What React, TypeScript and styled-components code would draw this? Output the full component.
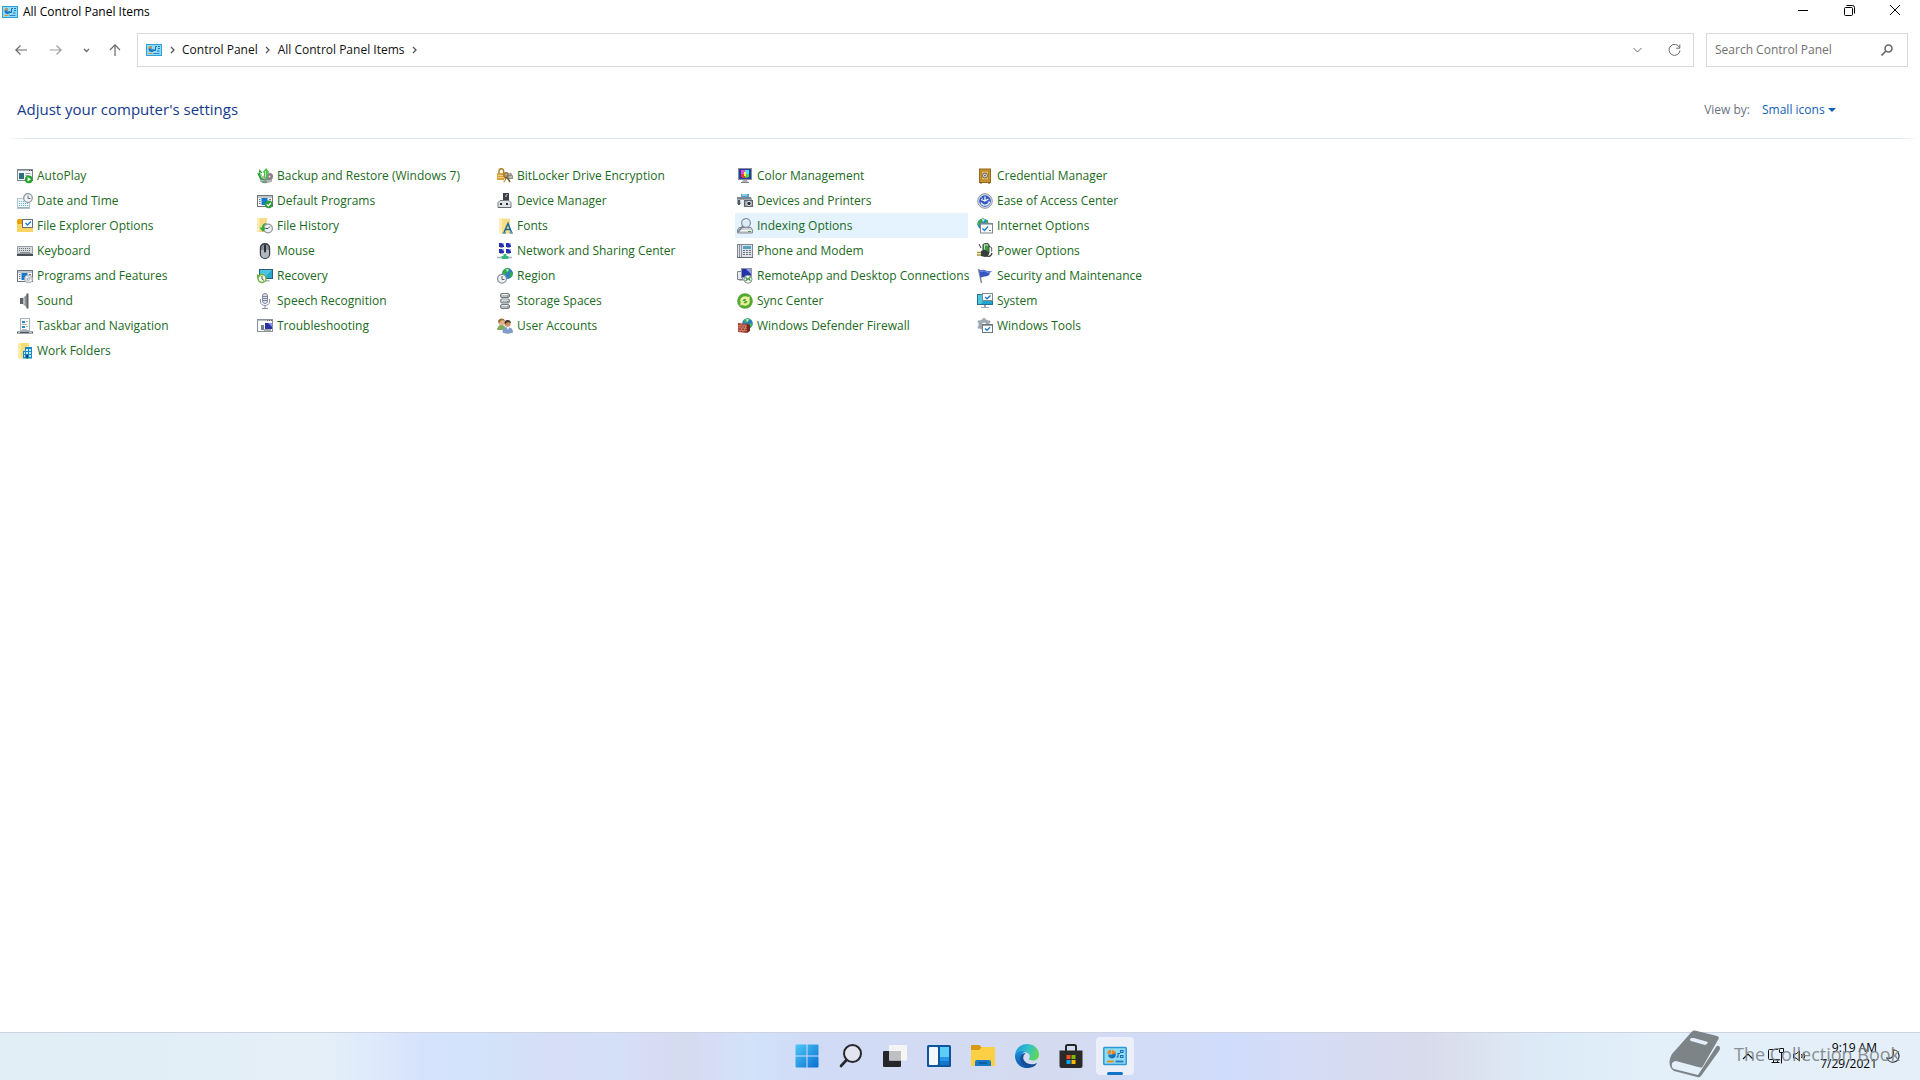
import React from "react";
import styled, { createGlobalStyle } from "styled-components";

const GlobalStyle = createGlobalStyle`
  * { box-sizing: border-box; }
  html, body, #root { height: 100%; }
  body {
    margin: 0;
    background: #fff;
    color: #000;
    font-family: "Open Sans", "Noto Sans", sans-serif;
    font-size: 12px;
    line-height: 16px;
    overflow: hidden;
  }
  button, input, select { font: inherit; color: inherit; }
  svg { flex-shrink: 0; }
`;

/* ---------- layout ---------- */

const Desktop = styled.div`
  display: flex;
  flex-direction: column;
  min-height: 100vh;
`;

const Window = styled.main`
  display: flex;
  flex-direction: column;
  flex: 1;
`;

const TitleBar = styled.header`
  display: flex;
  align-items: center;
  gap: 5px;
  height: 24px;
  padding: 0 2px;
`;

const Title = styled.h1`
  flex: 1;
  margin: 0;
  font-size: 12px;
  font-weight: 400;
`;

const PlainButton = styled.button`
  display: flex;
  align-items: center;
  justify-content: center;
  padding: 0;
  border: 0;
  background: none;
`;

const CaptionButtons = styled.div`
  display: flex;
  align-self: flex-start;
`;

const CaptionButton = styled(PlainButton)`
  width: 46px;
  height: 20px;
`;

const NavBar = styled.nav`
  display: flex;
  align-items: center;
  height: 34px;
  margin-top: 9px;
  padding: 0 12px 0 4px;
`;

const NavButton = styled(PlainButton)<{ $width: number }>`
  width: ${(p) => p.$width}px;
  height: 32px;
`;

const AddressBar = styled.div`
  display: flex;
  flex: 1;
  align-items: center;
  height: 34px;
  margin: 0 12px 0 5px;
  padding-left: 8px;
  border: 1px solid #d9d9d9;
`;

const Crumb = styled.a`
  color: #111;
  text-decoration: none;
`;

const CrumbArrow = styled.span`
  display: flex;
  justify-content: center;
  width: 20px;
`;

const Spacer = styled.div`
  flex: 1;
`;

const AddressButton = styled(PlainButton)`
  width: 37px;
  height: 32px;
`;

const SearchBox = styled.label`
  display: flex;
  align-items: center;
  width: 202px;
  height: 34px;
  padding: 0 14px 0 8px;
  border: 1px solid #d9d9d9;
`;

const SearchInput = styled.input`
  flex: 1;
  min-width: 0;
  padding: 0;
  border: 0;
  outline: 0;
  background: none;
  &::placeholder { color: #6f6f6f; opacity: 1; }
`;

const Heading = styled.section`
  display: flex;
  align-items: center;
  justify-content: space-between;
  height: 71px;
  padding: 14px 84px 0 17px;
`;

const HeadingTitle = styled.h2`
  margin: 0;
  padding-bottom: 2px;
  color: #133a8c;
  font-size: 15px;
  font-weight: 400;
  line-height: 20px;
`;

const ViewBy = styled.div`
  display: flex;
  align-items: center;
  gap: 12px;
  color: #6b7280;
`;

const SelectWrap = styled.span`
  display: flex;
  align-items: center;
`;

const ViewSelect = styled.select`
  width: 66px;
  padding: 0;
  border: 0;
  outline: 0;
  background: none;
  color: #0f5fb8;
  appearance: none;
`;

const Divider = styled.hr`
  width: 100%;
  height: 1px;
  margin: 0;
  border: 0;
  background: linear-gradient(90deg, #fff 6px, #dbe5ec 30px, #dbe5ec calc(100% - 24px), #fff);
`;

const ItemGrid = styled.ul`
  display: grid;
  grid-template-columns: repeat(5, 233px);
  grid-auto-rows: 25px;
  column-gap: 7px;
  margin: 24px 0 0;
  padding: 0 0 0 15px;
  list-style: none;
`;

const ItemLink = styled.a<{ $active: boolean }>`
  display: flex;
  align-items: center;
  gap: 4px;
  height: 25px;
  padding-left: 2px;
  background: ${(p) => (p.$active ? "#e5f3ff" : "transparent")};
  color: #1b6a22;
  text-decoration: none;
  white-space: nowrap;
`;

const Taskbar = styled.footer`
  position: relative;
  display: grid;
  grid-template-columns: 1fr auto 1fr;
  align-items: center;
  height: 48px;
  padding-left: 2px;
  box-shadow: inset 0 1px #cdd3e2;
  background: linear-gradient(
    90deg,
    #e1eef6 0%, #e4eff8 17%, #dde8fb 20%, #d6e2fc 22%, #d2e3fa 25%, #d7ddf7 29%,
    #d4e0f8 32%, #d8dbf4 34%, #d4dbee 36%, #d7dcf6 37%, #d2e2f9 39%, #d1dbf6 42%,
    #d4dbf0 55%, #d0dcfb 64%, #d5dcf5 68%, #d8daea 74%, #dde5f2 78%, #dcebf7 81%,
    #e3eff9 86%, #e4effa 100%
  );
`;

const TaskButtons = styled.div`
  display: flex;
  grid-column: 2;
`;

const TaskButton = styled(PlainButton)<{ $active?: boolean }>`
  position: relative;
  width: 38px;
  height: 38px;
  margin: 0 3px;
  border-radius: 4px;
  background: ${(p) => (p.$active ? "#eceff9" : "transparent")};
  &::after {
    content: "";
    position: absolute;
    bottom: 0;
    left: 11px;
    width: 16px;
    height: 3px;
    border-radius: 2px;
    background: ${(p) => (p.$active ? "#1173c7" : "transparent")};
  }
`;

const Tray = styled.div`
  display: flex;
  align-items: center;
  justify-content: flex-end;
  padding-right: 20px;
`;

const TrayButton = styled(PlainButton)`
  width: 24px;
  height: 24px;
  &:first-child { margin-right: 4px; }
`;

const Clock = styled(PlainButton)`
  flex-direction: column;
  align-items: flex-end;
  width: 65px;
  margin-right: 9px;
`;

const Watermark = styled.div`
  position: absolute;
  top: -2px;
  right: 20px;
  display: flex;
  align-items: center;
  gap: 12px;
  color: #7f8588;
  font-size: 18px;
  line-height: 48px;
  opacity: 0.9;
  pointer-events: none;
`;

/* ---------- icons ---------- */

const Icon16 = ({ children }: { children: React.ReactNode }) => (
  <svg width="16" height="16" viewBox="0 0 16 16" fill="none" aria-hidden="true">
    {children}
  </svg>
);

const PanelArt = () => (
  <>
    <rect x=".5" y="2.5" width="15" height="11" fill="#8fdcfa" stroke="#2b9fd6" />
    <path d="M5.5 7.5V4A3 3 0 1 0 8.5 7z" fill="#1f78c4" />
    <path d="M5 6.5V3.7A3 3 0 0 0 2.3 6.5z" fill="#f08a1c" />
    <path d="M8 8.5h1.5V4.5h1.5M11 9h2.5M12 4.5h2M12 6.5h2" stroke="#1f6fb5" />
    <path d="M2.5 11.5h4" stroke="#f08a1c" />
    <path d="M7.5 11.5h6" stroke="#2f84c8" />
  </>
);

const WindowArt = () => (
  <>
    <rect x=".5" y="2.5" width="15" height="11" fill="#f7f8fa" stroke="#6d747c" />
    <path d="M1 4h14" stroke="#8c949c" />
    <rect x="4.5" y="5" width="6" height="7" fill="#1479cf" />
    <path d="M2 6.5h1.5M2 8.5h1.5M2 10.5h1.5M12 6.5h2M12 8.5h2" stroke="#6d747c" />
  </>
);

const icons: Record<string, React.ReactNode> = {
  AutoPlay: (
    <>
      <rect x=".5" y="1.5" width="15" height="11" fill="#f4f6f8" stroke="#7d848b" />
      <path d="M1 2.5h14" stroke="#a8b0b8" />
      <path d="M12 2.5h1M14 2.5h1" stroke="#4b5259" />
      <rect x="2" y="5" width="5" height="6" fill="#2f6f7c" />
      <path d="M8.5 5.5h5M8.5 7.5h3" stroke="#9aa2aa" />
      <circle cx="11.8" cy="11.3" r="3.9" fill="#25a32f" />
      <path d="M10.6 9.1v4.4l3.4-2.2z" fill="#fff" />
    </>
  ),
  "Date and Time": (
    <>
      <rect x=".5" y="5.5" width="12" height="10" fill="#eef5f8" stroke="#b5c3cb" />
      <path d="M2 8.5h9M2 10.5h9M2 12.5h9" stroke="#62b4cb" strokeDasharray="1 1" />
      <path d="M1 14.5h11" stroke="#9fb0b8" />
      <circle cx="11" cy="5" r="4.3" fill="#f2f4f5" stroke="#8d979e" strokeWidth="1.2" />
      <path d="M11 2.5V5.5h2.5" stroke="#66727c" />
    </>
  ),
  "File Explorer Options": (
    <>
      <path d="M0 2.5L1 1h4.500L7 3h8v10.500H0z" fill="#e8a30c" />
      <path d="M0 6h16v8H1l-1-1z" fill="#fbd462" />
      <rect x="5.5" y="1.5" width="10" height="8" fill="#fff" stroke="#656d76" />
      <path d="M8.5 5l2 2L14 3.5" stroke="#1c7bd0" strokeWidth="1.4" />
    </>
  ),
  Keyboard: (
    <>
      <path d="M.5 3.5h15v7H.5z" fill="#d9dde1" stroke="#979da3" />
      <path d="M2 5.5h12M2 7.5h12" stroke="#666d74" strokeDasharray="1 1" />
      <path d="M3 9.5h10" stroke="#888e94" />
      <path d="M0 11h16v2H0z" fill="#4a5057" />
    </>
  ),
  "Programs and Features": (
    <>
      <WindowArt />
      <circle cx="11.5" cy="11" r="4" fill="#d5d9dd" stroke="#a5acb3" strokeWidth=".8" />
      <path d="M11.5 11L9 8.5M11.5 11l3 2" stroke="#fff" strokeWidth="1.4" />
      <circle cx="11.5" cy="11" r="1.1" fill="#fff" stroke="#8d949b" strokeWidth=".7" />
    </>
  ),
  Sound: (
    <>
      <path d="M3 5h3v6H3z" fill="#5d6064" />
      <path d="M6 5l5-4.500v15L6 11z" fill="#94989c" />
      <path d="M10.500 .5v15" stroke="#5f6266" strokeWidth="2" />
      <path d="M7 5v6" stroke="#d8dbdd" />
    </>
  ),
  "Taskbar and Navigation": (
    <>
      <rect x="3.5" y=".5" width="9" height="12" fill="#f6f8fa" stroke="#aab2b9" />
      <path d="M5 3h3v2H5zM5 8h3v2H5z" fill="#2a85c9" />
      <path d="M9 3.5h2M9 8.5h2M5 6.5h5M5 11.5h5" stroke="#b3bbc2" />
      <path d="M0 13.500h16v2H0z" fill="#4b525b" />
      <path d="M1 14.5h2M12 14.5h3" stroke="#b9c0c8" />
    </>
  ),
  "Work Folders": (
    <>
      <path d="M1 0h11v15l-10 .5L1 14z" fill="#f9dc74" />
      <path d="M1 0h3v15.500L1 14z" fill="#fdeaa4" />
      <path d="M8 4h7v11.500H6V8h2z" fill="#1488c9" />
      <path d="M9 6h2v2H9zM12 6h2v2h-2zM9 9h2v2H9zM12 9h2v2h-2zM7 9h1v2H7zM7 12h1v2H7zM12 12h2v2h-2z" fill="#c5ebfc" />
      <path d="M9.5 12h1.500v3.500H9.5z" fill="#0b3f73" />
    </>
  ),
  "Backup and Restore (Windows 7)": (
    <>
      <path d="M3 9l5-2 7 2v5l-7 1.500L3 14z" fill="#b2b7bb" />
      <path d="M3 10l5 2 7-2" stroke="#6b7176" />
      <circle cx="12.5" cy="8.5" r="3.5" fill="#8b7f86" />
      <circle cx="12.5" cy="8.5" r="1" fill="#efdbe0" />
      <path d="M2 9L0 5l1.500.5L2.500 1l3 4H4l2 7-3-.5z" fill="#2fa43b" />
      <path d="M5.500 4.500L9 0l3.500 4.500-2 .5V12L7 9.500V4.500z" fill="#4fbf4d" />
      <path d="M3 4l2 6M8.500 3v6" stroke="#b0e6a0" />
      <path d="M5 14h5" stroke="#37853a" />
    </>
  ),
  "Default Programs": (
    <>
      <WindowArt />
      <circle cx="11.7" cy="11.3" r="3.9" fill="#2d9d3b" />
      <path d="M9.8 11.3l1.500 1.500 2.500-2.800" stroke="#fff" strokeWidth="1.2" />
    </>
  ),
  "File History": (
    <>
      <path d="M0 0h10v14H1l-1-1z" fill="#f7da86" />
      <path d="M0 0h2.500v13.500L0 13z" fill="#fcecb6" />
      <circle cx="11" cy="10.5" r="4.4" fill="#eef1f3" stroke="#8d959c" strokeWidth="1.2" />
      <path d="M11 10.5l2-2M11 10.5H8.5" stroke="#48525b" />
      <path d="M9.5 5C6 5 5 7.5 5 9.5H2.5L6 14l3-4.500H7c0-1.500.5-3 2.500-4.500z" fill="#35a941" />
    </>
  ),
  Mouse: (
    <>
      <rect x="3.5" y=".7" width="9" height="14.600" rx="4.2" fill="#8b939d" stroke="#343941" strokeWidth="1.4" />
      <path d="M4 7h8v4a4 4 0 0 1-8 0z" fill="#b0b7c0" />
      <rect x="7" y="1.5" width="2" height="8" rx="1" fill="#262b31" />
    </>
  ),
  Recovery: (
    <>
      <rect x="2.5" y="1.5" width="13" height="9" fill="#27a6ce" stroke="#2d5c78" />
      <path d="M3 2h12L7 10H3z" fill="#4cc5e0" />
      <path d="M8 12h4l1 1.500H8z" fill="#aab2b8" />
      <circle cx="5" cy="10.5" r="4" fill="#f0f6e9" stroke="#72af3c" strokeWidth="1.4" />
      <path d="M5 8v3l2 1.500" stroke="#4a5f3b" />
      <path d="M0 6v4.500L3.500 8z" fill="#72af3c" />
    </>
  ),
  "Speech Recognition": (
    <>
      <rect x="5.5" y=".5" width="5" height="10" rx="2.5" fill="#dfe2e9" stroke="#8288a0" />
      <path d="M6 3.5h4M6 5.5h4M6 7.5h4" stroke="#7c849c" />
      <path d="M3.5 6v3c0 2 2 3.500 4.500 3.500s4.500-1.500 4.500-3.500V6M8 12.5V15M5 15.5h6" stroke="#8a90a6" />
    </>
  ),
  Troubleshooting: (
    <>
      <rect x=".5" y="1.5" width="15" height="12" fill="#fafbfc" stroke="#8b9198" />
      <path d="M1 2.5h14" stroke="#b9c0c7" />
      <path d="M10 2.5h1M12 2.5h1M14 2.5h1" stroke="#5b6269" />
      <rect x="4" y="7" width="3" height="5" fill="#74808b" />
      <rect x="8" y="5" width="7" height="6" fill="#2830a5" />
      <path d="M11 5h4v4z" fill="#8b94e8" />
      <path d="M7 12h7" stroke="#575e66" />
      <path d="M5 8h1" stroke="#3fbd42" />
    </>
  ),
  "BitLocker Drive Encryption": (
    <>
      <path d="M7 5h7l2 3v3H7z" fill="#8d9092" />
      <path d="M8 6h5M8 9h7" stroke="#dde0de" />
      <path d="M2 6V3a2.300 2.300 0 0 1 4.600 0V6" stroke="#a98331" strokeWidth="1.5" />
      <rect y="5" width="8" height="7" rx="1" fill="#d9a136" />
      <path d="M1 7.5h6M1 9.5h6" stroke="#f4d282" />
      <circle cx="9" cy="7" r="2.2" stroke="#a1762e" strokeWidth="1.4" />
      <path d="M9 9l-2 5M10 9l3 5" stroke="#7c6131" strokeWidth="1.6" />
      <path d="M6.5 14.5L8 10" stroke="#f4e6bd" />
    </>
  ),
  "Device Manager": (
    <>
      <rect x="6" y="0" width="6" height="8" fill="#3d4146" />
      <path d="M8 3h2" stroke="#d7dade" />
      <path d="M9 1.5h2" stroke="#90969c" />
      <path d="M3 7.5h9l2 2v5H1v-5z" fill="#dfe2e4" stroke="#777d82" />
      <path d="M3 10h2v2H3zM9 10h2v2H9z" fill="#25292d" />
      <path d="M1 14.5h13" stroke="#62676c" />
    </>
  ),
  Fonts: (
    <>
      <path d="M2 .5h11v15H4l-2-2z" fill="#f9de87" />
      <path d="M2 .5h3v15H4l-2-2z" fill="#fdeeb8" />
      <path d="M7 14.5L11 5.5l3.500 9M8.5 11.5h5" stroke="#17699c" strokeWidth="1.5" />
      <path d="M5.5 15h3.500M12.5 15h3.500" stroke="#17699c" />
    </>
  ),
  "Network and Sharing Center": (
    <>
      <path d="M2 0h5v4H2zM9 0h5v4H9zM2 6h5v4H2zM9 6h5v4H9z" fill="#2632b4" />
      <path d="M4.500 0H7v2.500zM11.500 0H14v2.500zM4.500 6H7v2.500zM11.500 6H14v2.500z" fill="#9da7f4" />
      <path d="M3 4.500h3M10 4.500h3M3 10.500h3M10 10.500h3" stroke="#9da3b0" />
      <path d="M6.500 11h3v2h2v3h-7v-3h2z" fill="#35b87f" />
      <path d="M0 14.500h4.500M11.500 14.500H15" stroke="#a9b3b3" strokeWidth="1.6" />
    </>
  ),
  Region: (
    <>
      <circle cx="10.5" cy="5.5" r="5.4" fill="#2a7fc9" />
      <path d="M7 1.5C9 0 12 0 13 1l-1 3-3 1-1 3-2-1C5 5 5.5 3 7 1.500zM13 5l2.500-1c1 3-1 5.500-3 6.500z" fill="#36ab46" />
      <path d="M9 1l3 .5L10 4z" fill="#b7ecda" />
      <circle cx="5" cy="10.8" r="4.4" fill="#eef2f5" stroke="#87939d" strokeWidth="1.2" />
      <path d="M5 8v3.500h2.500" stroke="#59656f" />
    </>
  ),
  "Storage Spaces": (
    <>
      {[0, 5.5, 11].map((y) => (
        <g key={y}>
          <rect x="3.5" y={y + 0.5} width="9" height="4" rx="1.5" fill="#b9bdc0" stroke="#747a7f" />
          <path d={`M5 ${y + 1.5}h6`} stroke="#eceef0" />
          <path d={`M10 ${y + 3}h1.5`} stroke="#4e9d45" />
        </g>
      ))}
    </>
  ),
  "User Accounts": (
    <>
      <circle cx="4.5" cy="4" r="3.2" fill="#e2b388" />
      <path d="M1 4C1 0 7-1 8 3L5 2 2 5z" fill="#9a7138" />
      <path d="M0 12c0-3 2-5 4.500-5S9 9 9 12z" fill="#7eaa62" />
      <circle cx="10.5" cy="5.5" r="3.2" fill="#cf8f64" />
      <path d="M7.5 5c0-4 6-4 6.500 0l-3-1-3 2z" fill="#42352e" />
      <path d="M5.5 14.5c0-4 2-5.500 5-5.500s5.500 2 5.500 5.500c-3 1.500-8 1.500-10.500 0z" fill="#7f9ccb" />
      <path d="M9.5 9l1.500 3 1.500-3z" fill="#fff" />
    </>
  ),
  "Color Management": (
    <>
      <rect x="1.5" y=".5" width="13" height="11" fill="#273da4" stroke="#8a8f98" />
      <path d="M4 2h4v4H4z" fill="#e94bd0" />
      <path d="M8 2h4v4H8z" fill="#4ee4ee" />
      <path d="M4 6h4v4H5L4 8z" fill="#e53935" />
      <path d="M8 6h4v3l-4 1z" fill="#59da43" />
      <path d="M7 4h2v4H7z" fill="#fff36b" />
      <path d="M6 12h4l1 2H5z" fill="#abb0b6" />
      <path d="M4 14.5h8" stroke="#7f858c" />
    </>
  ),
  "Devices and Printers": (
    <>
      <path d="M4 1h8v4H4z" fill="#54a4cb" />
      <path d="M5 2h5" stroke="#c4ebfa" />
      <path d="M0 4h14l1 2v5H0z" fill="#a4abb1" />
      <path d="M0 5h14" stroke="#5d656c" />
      <path d="M3 7h5v7H5z" fill="#e7eff5" />
      <path d="M1 7h2v5H1z" fill="#4e565e" />
      <rect x="7.5" y="7.5" width="8" height="6" fill="#9ba1a7" stroke="#5b6168" />
      <circle cx="12" cy="10.5" r="2.2" fill="#2e3338" stroke="#e1e4e6" />
    </>
  ),
  "Indexing Options": (
    <>
      <path d="M2 9.5h12l1.500 2.500v3H.5v-3z" fill="#d0d4d8" stroke="#878c92" />
      <path d="M1 12.500h14" stroke="#f8f9fa" />
      <path d="M11 13.500h3" stroke="#4c9b42" />
      <circle cx="9" cy="5" r="4.4" fill="#d9eaf9" fillOpacity=".9" stroke="#8592a1" strokeWidth="1.2" />
      <path d="M6 8l-5 6" stroke="#788390" strokeWidth="1.6" />
      <path d="M6.500 4c.5-1.500 2-2 3.500-2" stroke="#fff" />
    </>
  ),
  "Phone and Modem": (
    <>
      <rect x=".5" y="1.5" width="15" height="13" fill="#dfe3e7" stroke="#7f868e" />
      <path d="M2.5 2v12M4.5 2v12" stroke="#89929b" />
      <rect x="6" y="3" width="8" height="3" fill="#54a2bf" />
      <path d="M6 7.5h8M6 9.5h8M6 11.5h8" stroke="#68727c" strokeDasharray="2 1" />
      <path d="M0 14.5h16" stroke="#5e666e" />
    </>
  ),
  "RemoteApp and Desktop Connections": (
    <>
      <path d="M.5 3.5h5v8h-5z" fill="#e8ebef" stroke="#7d8590" />
      <rect x="4.5" y=".5" width="10" height="9" fill="#2634a7" stroke="#8f95a0" />
      <path d="M9 1h5v5z" fill="#8f9cf0" />
      <path d="M2 12h5" stroke="#78808a" />
      <circle cx="11" cy="11.3" r="4" fill="#f3f5f4" stroke="#8b9490" />
      <path d="M8.5 9.500l2 1.800-2 1.800M13.500 9l-2 1.800 2 1.800" stroke="#31953c" strokeWidth="1.2" />
    </>
  ),
  "Sync Center": (
    <>
      <circle cx="8" cy="8" r="7.8" fill="#55a832" />
      <path d="M3 8a5 5 0 0 1 8-3.800L12.500 3v5H8l1.500-1.800C7.500 5 6 6 5.500 8z" fill="#eef3a4" />
      <path d="M13 8a5 5 0 0 1-8 3.800L3.500 13V8H8L6.500 9.800C8.500 11 10 10 10.500 8z" fill="#e6ee9a" />
    </>
  ),
  "Windows Defender Firewall": (
    <>
      <circle cx="10.5" cy="5.5" r="5.3" fill="#2b7ac0" />
      <path d="M7 2c2-2 5-2 6-1l-2 3-3 1zM12 6l3.500-1c0 3-1 4-3 5z" fill="#47b454" />
      <path d="M9 1l3 .5L10 4z" fill="#c6efe6" />
      <path d="M1 5l9 1v9l-9-1z" fill="#a13e2b" />
      <path d="M10 6l3 1v6l-3 2z" fill="#702a20" />
      <path d="M1 7.5l9 .5M1 9.800l9 .5M1 12.200l9 .5M4 5.500v2M7 6v2M3 7.500v2.300M6 8v2M8.500 8v2M4.500 10v2M7.500 10v2.500M3 12.200v2M6 12.500v2" stroke="#e0a08c" strokeWidth=".6" />
    </>
  ),
  "Credential Manager": (
    <>
      <rect x="2.5" y="1" width="11" height="13.5" fill="#c9952f" stroke="#94691d" />
      <rect x="4.5" y="3" width="7" height="9" fill="#e3bd66" stroke="#b2822b" />
      <circle cx="8" cy="7.5" r="2.5" fill="#d6d3c8" stroke="#6e655a" />
      <circle cx="8" cy="7.5" r=".8" fill="#4a443c" />
      <path d="M3 15h2M11 15h2" stroke="#70501a" />
    </>
  ),
  "Ease of Access Center": (
    <>
      <circle cx="8" cy="8" r="7.3" fill="#d6dbe4" stroke="#8e96a5" />
      <circle cx="8" cy="8" r="5.8" fill="#3157c2" />
      <path d="M8 3.5v4.500l3.500-2M4 6.500L8 8" stroke="#fff" strokeWidth="1.3" />
      <path d="M4 9.500c1 3.500 7 3.500 8 0" stroke="#dfe9ff" strokeWidth="1.3" />
      <path d="M10.500 8.500h2.500v2z" fill="#fff" />
      <path d="M4.500 4.500l1 1" stroke="#fff" />
    </>
  ),
  "Internet Options": (
    <>
      <circle cx="6" cy="6" r="5.6" fill="#2a86cd" />
      <path d="M2 2.500C4 0 7 0 8 1L6 4 3 5 2 8 .5 7c0-2 .5-3 1.500-4.500zM9 3l2-1v4H8z" fill="#3dab4d" />
      <path d="M5 1l3 .5L6 4z" fill="#cdf2e9" />
      <rect x="3.5" y="5.5" width="12" height="9.5" fill="#fafbfc" stroke="#7f868d" />
      <path d="M4 6.500h11" stroke="#b3bac1" />
      <path d="M5.500 10.500l2 2L11 8.500" stroke="#1c7ac8" strokeWidth="1.3" />
      <path d="M12 12.500h2" stroke="#747c84" />
    </>
  ),
  "Power Options": (
    <>
      <path d="M6 1.500C8 0 11 0 12 1.500v9c-1 1.500-4 1.500-6 0z" fill="#3c9a45" stroke="#3b4a40" />
      <path d="M7.500 2v7" stroke="#b9e9b2" />
      <path d="M7 2h4" stroke="#d9e3dd" />
      <path d="M2 1l2 4M12 3.500c3 0 3 3 2.500 5" stroke="#343b37" />
      <path d="M4 8l4-1.500 4 3c0 3-2 4.500-4 4.500l-4-1z" fill="#383c3a" />
      <path d="M9 12c2 2 5 2 6-2" stroke="#3b403d" strokeWidth="1.3" />
      <path d="M0 9.500h4M0 12h4" stroke="#a99539" strokeWidth="1.3" />
    </>
  ),
  "Security and Maintenance": (
    <>
      <path d="M1.5 1l3 14" stroke="#81889a" strokeWidth="1.4" />
      <path d="M2 1.500c3 2 4-1 7 1 2 1.200 4 .8 6.500.5-2 1-3 2-3 3.500-3 3.500-5 .5-9 3.500z" fill="#3656c4" />
      <path d="M3 3c3 1 4-1 6 .5s3 1.500 4 1" stroke="#839be8" />
    </>
  ),
  System: (
    <>
      <rect x=".5" y="1.5" width="15" height="10" fill="#23a6cc" stroke="#25718e" />
      <path d="M1 2h9L4 11H1z" fill="#4cc7df" />
      <path d="M7 12h2v2H7z" fill="#9aa2a9" />
      <path d="M4 14.5h8" stroke="#a3abb2" />
      <rect x="5.5" y=".5" width="10" height="7" fill="#fff" stroke="#808991" />
      <path d="M8 4l2 1.800L13.500 2.500" stroke="#1978cb" strokeWidth="1.3" />
    </>
  ),
  "Windows Tools": (
    <>
      <circle cx="7" cy="6.5" r="3.8" stroke="#a0a8b0" strokeWidth="3.6" />
      <path d="M7 0v3M7 10v3M1 3l3 2M13 3l-3 2M1 10l3-2" stroke="#a0a8b0" strokeWidth="2.6" />
      <rect x="5.5" y="6.5" width="10" height="8" fill="#fff" stroke="#6d757d" />
      <path d="M6 7.500h9" stroke="#979fa7" />
      <path d="M8 10.500l2 1.800 3-3" stroke="#1978cb" strokeWidth="1.3" />
    </>
  ),
};

const itemNames = [
  "AutoPlay", "Backup and Restore (Windows 7)", "BitLocker Drive Encryption", "Color Management", "Credential Manager",
  "Date and Time", "Default Programs", "Device Manager", "Devices and Printers", "Ease of Access Center",
  "File Explorer Options", "File History", "Fonts", "Indexing Options", "Internet Options",
  "Keyboard", "Mouse", "Network and Sharing Center", "Phone and Modem", "Power Options",
  "Programs and Features", "Recovery", "Region", "RemoteApp and Desktop Connections", "Security and Maintenance",
  "Sound", "Speech Recognition", "Storage Spaces", "Sync Center", "System",
  "Taskbar and Navigation", "Troubleshooting", "User Accounts", "Windows Defender Firewall", "Windows Tools",
  "Work Folders",
];

type StrokeProps = { d: string; w?: number; h?: number; color?: string; sw?: number };
const Stroke = ({ d, w = 12, h = 12, color = "#6b6b6b", sw = 1 }: StrokeProps) => (
  <svg width={w} height={h} viewBox={`0 0 ${w} ${h}`} fill="none" stroke={color} strokeWidth={sw} aria-hidden="true">
    <path d={d} />
  </svg>
);

const Chevron = () => <Stroke w={5} h={8} d="M1 1l3 3-3 3" color="#555" sw={1.3} />;

const taskIcons: { label: string; art: React.ReactNode }[] = [
  {
    label: "Start",
    art: (
      <>
        <defs>
          <linearGradient id="start" x1="0" y1="0" x2="1" y2="1">
            <stop stopColor="#4cc8f7" />
            <stop offset="1" stopColor="#0a6fd0" />
          </linearGradient>
        </defs>
        <path d="M.5 1.5a1 1 0 0 1 1-1H11.500v11H.5zM12.500.5h10a1 1 0 0 1 1 1v10h-11zM.5 12.500h11v11h-10a1 1 0 0 1-1-1zM12.500 12.500h11v10a1 1 0 0 1-1 1h-10z" fill="url(#start)" />
      </>
    ),
  },
  {
    label: "Search",
    art: (
      <>
        <circle cx="13.5" cy="9.5" r="8.5" fill="#e2e5f0" stroke="#26282d" strokeWidth="2" />
        <path d="M7.500 16L2 22" stroke="#26282d" strokeWidth="2.6" strokeLinecap="round" />
      </>
    ),
  },
  {
    label: "Task view",
    art: (
      <>
        <rect x="0" y="7" width="18" height="16" rx="1" fill="#26272a" />
        <rect x="6" y="1" width="18" height="15.5" rx="1" fill="#f5f5f6" />
        <path d="M6 7h12v9.500H6z" fill="#bfc0c2" />
      </>
    ),
  },
  {
    label: "Widgets",
    art: (
      <>
        <rect width="24" height="22" y="1" rx="1.5" fill="#0f569c" />
        <rect x="2" y="3" width="9" height="18" rx="1" fill="#f4f8fc" />
        <path d="M13 3h9v10h-9z" fill="#5ecdfa" />
        <path d="M13 13h9v4h-9z" fill="#2497e8" />
        <path d="M13 17h9v4h-9z" fill="#1477cb" />
      </>
    ),
  },
  {
    label: "File Explorer",
    art: (
      <>
        <path d="M0 2a1 1 0 0 1 1-1h7.500l2.500 3v3H0z" fill="#d99a10" />
        <path d="M0 6h8l3-3h12a1 1 0 0 1 1 1v18H1a1 1 0 0 1-1-1z" fill="#fccf44" />
        <path d="M4 22v-4a2 2 0 0 1 2-2h12a2 2 0 0 1 2 2v4z" fill="#1778c5" />
        <path d="M8 19h8" stroke="#0b5496" strokeWidth="1.5" />
      </>
    ),
  },
  {
    label: "Microsoft Edge",
    art: (
      <>
        <defs>
          <linearGradient id="edgeTop" x1="0" y1=".3" x2="1" y2=".6">
            <stop stopColor="#1c9bdb" />
            <stop offset=".5" stopColor="#35c1c9" />
            <stop offset="1" stopColor="#63d84f" />
          </linearGradient>
          <linearGradient id="edgeSide" x1="0" y1="0" x2="0" y2="1">
            <stop stopColor="#1b8edb" />
            <stop offset="1" stopColor="#0d55ab" />
          </linearGradient>
        </defs>
        <path d="M0 11.500C.5 5 5.500 0 12 0c7 0 12 5 12 10.500 0 4-3 6-6 6-2.500 0-4.500-1-4-2 1.500-2 1-5-2.500-6C7 7.500 2 9 0 13z" fill="url(#edgeTop)" />
        <path d="M0 12c1.500-4.500 6-6 10-4.500-3 1.500-4 4.500-3.500 7.500.8 4.500 5 7 9 6.500 3-.3 5.500-2 6.500-2-2 3-6 4.500-10 4.500C5 24 0 18.500 0 12z" fill="url(#edgeSide)" />
        <path d="M10.500 9.500c-2.500 1.500-3 5-1 7.500 3 4 9 4 12.500 2-2 3.500-7 5-10 4-5-1.500-7.500-5.500-6.500-10 .7-2.500 3-4.500 5-3.500z" fill="#164f96" />
      </>
    ),
  },
  {
    label: "Microsoft Store",
    art: (
      <>
        <path d="M7 7V2.500A1.500 1.500 0 0 1 8.500 1h7A1.500 1.500 0 0 1 17 2.500V7" stroke="#242527" strokeWidth="2" />
        <path d="M.5 6.500h23V22a2 2 0 0 1-2 2h-19a2 2 0 0 1-2-2z" fill="#2a2a2b" />
        <path d="M7.500 11h4v4h-4z" fill="#f25022" />
        <path d="M12.500 11h4v4h-4z" fill="#7fba00" />
        <path d="M7.500 16h4v4h-4z" fill="#00a4ef" />
        <path d="M12.500 16h4v4h-4z" fill="#ffb900" />
      </>
    ),
  },
  {
    label: "Control Panel",
    art: (
      <>
        <rect x=".8" y="3.5" width="22.4" height="17" rx=".8" fill="#8edcf8" stroke="#2b9bd2" strokeWidth="1.5" />
        <path d="M9 10.500V6.800a3.800 3.800 0 1 1-3.800 3.800z" fill="#1c70b8" />
        <path d="M8.300 9.800V5.800a4.200 4.200 0 0 0-4.100 4z" fill="#f0851a" />
        <path d="M9 10.500V6.300a4.200 4.200 0 0 1 4 3z" fill="#f0851a" />
        <path d="M13.500 13h1.500V9.500h2M17.500 6.500h2.500v2h-2.500zM17.500 11.500h2.500v2h-2.500z" stroke="#1d6db2" strokeWidth="1.1" />
        <path d="M4 17.500h7" stroke="#ed8a22" strokeWidth="1.8" />
        <path d="M12.500 17.500h8" stroke="#2375bd" strokeWidth="1.8" />
      </>
    ),
  },
];

export default function App() {
  return (
    <Desktop>
      <GlobalStyle />
      <Window>
        <TitleBar>
          <Icon16><PanelArt /></Icon16>
          <Title>All Control Panel Items</Title>
          <CaptionButtons>
            <CaptionButton aria-label="Minimize"><Stroke w={10} h={10} d="M0 5.500h10" color="#000" /></CaptionButton>
            <CaptionButton aria-label="Restore">
              <Stroke w={11} h={11} d="M.5 3.500a1 1 0 0 1 1-1h6a1 1 0 0 1 1 1v6a1 1 0 0 1-1 1h-6a1 1 0 0 1-1-1zM2.500 .5h6a2 2 0 0 1 2 2v6" color="#000" />
            </CaptionButton>
            <CaptionButton aria-label="Close"><Stroke w={10} h={10} d="M0 0l10 10M10 0L0 10" color="#000" /></CaptionButton>
          </CaptionButtons>
        </TitleBar>

        <NavBar aria-label="Location">
          <NavButton $width={34} aria-label="Back"><Stroke w={12} h={10} d="M12 5H.8M5.500 .5L.8 5l4.700 4.500" sw={1.2} /></NavButton>
          <NavButton $width={36} aria-label="Forward"><Stroke w={12} h={10} d="M0 5h11.200M6.500 .5L11.200 5 6.500 9.500" color="#9d9d9d" sw={1.2} /></NavButton>
          <NavButton $width={24} aria-label="Recent locations"><Stroke w={7} h={5} d="M1 1l2.500 2.500L6 1" sw={1.3} /></NavButton>
          <NavButton $width={34} aria-label="Up"><Stroke w={12} h={12} d="M6 12V.8M1 6L6 .8 11 6" sw={1.2} /></NavButton>
          <AddressBar>
            <Icon16><PanelArt /></Icon16>
            <CrumbArrow><Chevron /></CrumbArrow>
            <Crumb href="#control-panel">Control Panel</Crumb>
            <CrumbArrow><Chevron /></CrumbArrow>
            <Crumb href="#all-items">All Control Panel Items</Crumb>
            <CrumbArrow><Chevron /></CrumbArrow>
            <Spacer />
            <AddressButton aria-label="Previous locations"><Stroke w={9} h={6} d="M.5 1l4 4 4-4" /></AddressButton>
            <AddressButton aria-label="Refresh"><Stroke w={13} h={13} d="M11.500 3.500A5.500 5.500 0 1 0 12 6.500M11.800 .5v3.700H8" /></AddressButton>
          </AddressBar>
          <SearchBox>
            <SearchInput type="text" placeholder="Search Control Panel" aria-label="Search Control Panel" />
            <Stroke w={12} h={12} d="M11 4.500a3.500 3.500 0 1 1-7 0 3.500 3.500 0 0 1 7 0zM5 7L.5 11.500" sw={1.6} />
          </SearchBox>
        </NavBar>

        <Heading>
          <HeadingTitle>Adjust your computer's settings</HeadingTitle>
          <ViewBy>
            <label htmlFor="view-by">View by:</label>
            <SelectWrap>
              <ViewSelect id="view-by" defaultValue="Small icons">
                <option>Category</option>
                <option>Large icons</option>
                <option>Small icons</option>
              </ViewSelect>
              <svg width="8" height="4" viewBox="0 0 8 4" aria-hidden="true"><path d="M0 0h8L4 4z" fill="#0f5fb8" /></svg>
            </SelectWrap>
          </ViewBy>
        </Heading>
        <Divider />

        <ItemGrid>
          {itemNames.map((name) => (
            <li key={name}>
              <ItemLink href="#item" $active={name === "Indexing Options"}>
                <Icon16>{icons[name]}</Icon16>
                {name}
              </ItemLink>
            </li>
          ))}
        </ItemGrid>
      </Window>

      <Taskbar>
        <Watermark>
          <svg width="54" height="48" viewBox="0 0 54 48" aria-hidden="true">
            <path fillRule="evenodd" d="M24 1.500Q25 0 27 .5L49 6q2.500 1 1.500 3L35 36q-1 2-3 1.500L8 31q-2 0-4 2-1 5 2 6l24 6 18-28q1-2 3-1 2 2 0 5L33 46q-1.500 2-4 1L6 41q-5-3-4.500-10Q2 27 4 24zM23 8q-2 2 0 3l14 4q2 0 3-3L26 8z" fill="#73797c" />
          </svg>
          <span>The Collection Book</span>
        </Watermark>
        <TaskButtons>
          {taskIcons.map(({ label, art }) => (
            <TaskButton key={label} aria-label={label} $active={label === "Control Panel"}>
              <svg width="24" height="24" viewBox="0 0 24 24" fill="none" aria-hidden="true">{art}</svg>
            </TaskButton>
          ))}
        </TaskButtons>
        <Tray>
          <TrayButton aria-label="Show hidden icons"><Stroke w={12} h={8} d="M1 7l5-5 5 5" color="#111" sw={1.2} /></TrayButton>
          <TrayButton aria-label="Network">
            <Stroke w={16} h={16} d="M10 1.500H1.500a1 1 0 0 0-1 1v8a1 1 0 0 0 1 1H12M3.500 14.500h8M5.500 11.500v3M9.500 11.500v3M11.500 .5h4v4h-4zM13.500 4.500v11" color="#111" />
          </TrayButton>
          <TrayButton aria-label="Volume">
            <Stroke w={14} h={12} d="M.5 4v4H3l3.500 3V1L3 4zM8.500 4q1.500 2 0 4M10.500 2.500q2.500 3.500 0 7" color="#111" />
          </TrayButton>
          <Clock>
            <span>9:19 AM</span>
            <span>7/29/2021</span>
          </Clock>
          <PlainButton aria-label="Notifications">
            <Stroke w={14} h={14} d="M7 .8A6.200 6.200 0 1 1 1 9C5 10.500 9 7 7 .8z" color="#222" sw={1.1} />
          </PlainButton>
        </Tray>
      </Taskbar>
    </Desktop>
  );
}
